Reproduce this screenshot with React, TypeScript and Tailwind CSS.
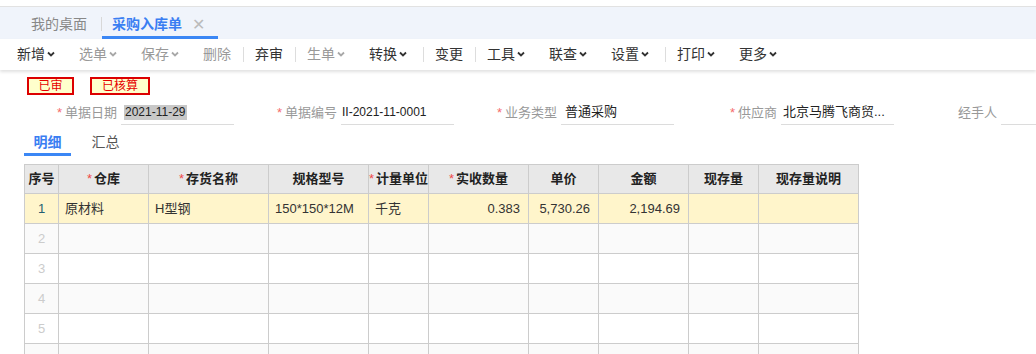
import type { ReactNode } from 'react';

type ToolItem = { label: string; drop?: boolean; disabled?: boolean; sep?: 'plain' | 'wide' };

const tools: ToolItem[] = [
  { label: '新增', drop: true },
  { label: '选单', drop: true, disabled: true },
  { label: '保存', drop: true, disabled: true },
  { label: '删除', disabled: true, sep: 'plain' },
  { label: '弃审', sep: 'plain' },
  { label: '生单', drop: true, disabled: true },
  { label: '转换', drop: true, sep: 'wide' },
  { label: '变更', sep: 'plain' },
  { label: '工具', drop: true },
  { label: '联查', drop: true },
  { label: '设置', drop: true, sep: 'wide' },
  { label: '打印', drop: true },
  { label: '更多', drop: true },
];

const cols = [
  { title: '序号', w: 'w-[34px]' },
  { title: '仓库', w: 'w-[90px]', req: true },
  { title: '存货名称', w: 'w-[120px]', req: true },
  { title: '规格型号', w: 'w-[100px]' },
  { title: '计量单位', w: 'w-[60px]', req: true },
  { title: '实收数量', w: 'w-[100px]', req: true },
  { title: '单价', w: 'w-[70px]' },
  { title: '金额', w: 'w-[90px]' },
  { title: '现存量', w: 'w-[70px]' },
  { title: '现存量说明', w: 'w-[100px]' },
];

const firstRow = ['原材料', 'H型钢', '150*150*12M', '千克', '0.383', '5,730.26', '2,194.69', '', ''];
// columns with numbers are right aligned
const rightCols = [5, 6, 7];

function Chevron({ disabled }: { disabled?: boolean }) {
  return (
    <svg width="8" height="6" viewBox="0 0 8 6" className="ml-[2px] -mt-[2px]">
      <polyline
        points="1,1.5 4,4.5 7,1.5"
        fill="none"
        stroke={disabled ? '#a8a8a8' : '#333'}
        strokeWidth="1.8"
      />
    </svg>
  );
}

function Field({ label, req, children }: { label: string; req?: boolean; children?: ReactNode }) {
  return (
    <div className="flex w-[220px] h-full items-center shrink-0">
      <div className="w-[103px] text-right text-[13px] text-[#999] whitespace-nowrap">
        {req && <span className="text-[#f56c6c] mr-[3px]">*</span>}
        {label}
      </div>
      <div className="ml-[4px] w-[113px] h-full border-b border-[#dcdcdc] flex items-center pl-[1px] text-[#222] whitespace-nowrap overflow-hidden">
        {children}
      </div>
    </div>
  );
}

export default function App() {
  return (
    <div className="w-[1036px] h-[354px] overflow-hidden bg-white font-['Liberation_Sans','Noto_Sans_CJK_SC',sans-serif]">
      {/* Page tabs */}
      <div className="h-[7px] bg-white border-b border-[#e2e2e2]" />
      <div className="flex h-[32px] bg-[#f0f4fb] text-[14px]">
        <div className="flex items-center pt-[3px] pl-[31px] pr-[14px] text-[#888]">我的桌面</div>
        <div className="w-px h-[14px] bg-[#d8d8d8] self-center mt-[2px]" />
        <div className="relative flex items-center pt-[3px] pl-[10px] pr-[13px]">
          <span className="font-bold text-[#3a7ef2]">采购入库单</span>
          <span className="ml-[10px] text-[#bbb] text-[16px] leading-none">✕</span>
          <div className="absolute left-0 right-0 bottom-0 h-[3px] bg-[#3b87f5]" />
        </div>
      </div>

      {/* Toolbar */}
      <div className="relative z-10 flex h-[31px] items-center pl-[5px] bg-white shadow-[0_2px_3px_rgba(0,0,0,0.12)] text-[14px]">
        {tools.map((t) => (
          <div key={t.label} className="flex items-center">
            <div className={`flex items-center px-[12px] ${t.disabled ? 'text-[#999]' : 'text-[#333]'}`}>
              {t.label}
              {t.drop && <Chevron disabled={t.disabled} />}
            </div>
            {t.sep && (
              <div className={`w-px h-[15px] bg-[#dddddd] -mr-px ${t.sep === 'wide' ? 'ml-[4px]' : ''}`} />
            )}
          </div>
        ))}
      </div>

      {/* Status badges */}
      <div className="flex mt-[7px] ml-[27px] gap-[16px] text-[12px] text-[#e60000]">
        <div className="w-[47px] h-[18px] border-2 border-[#dc0000] bg-[#ffffcc] flex items-center justify-center">已审</div>
        <div className="w-[60px] h-[18px] border-2 border-[#dc0000] bg-[#ffffcc] flex items-center justify-center">已核算</div>
      </div>

      {/* Header fields */}
      <div className="flex h-[25px] mt-[5px] pl-[14px]">
        <Field label="单据日期" req>
          <span className="ml-[2px] px-[1px] bg-[#c8c8c8] text-[12px] leading-[15px]">2021-11-29</span>
        </Field>
        <Field label="单据编号" req>
          <span className="text-[12px]">II-2021-11-0001</span>
        </Field>
        <Field label="业务类型" req>
          <span className="pl-[3px] text-[13px]">普通采购</span>
        </Field>
        <Field label="供应商" req>
          <span className="pl-[1px] text-[13px]">北京马腾飞商贸...</span>
        </Field>
        <Field label="经手人" />
      </div>

      {/* Detail tabs */}
      <div className="flex h-[28px] mt-[3px] pl-[24px] text-[14px]">
        <div className="relative w-[47px] flex items-center justify-center font-bold text-[#3a7ef2]">
          明细
          <div className="absolute left-0 right-0 bottom-0 h-[3px] bg-[#3b87f5]" />
        </div>
        <div className="w-[47px] ml-[11px] flex items-center justify-center text-[#555]">汇总</div>
      </div>

      {/* Grid */}
      <div className="mt-[8px] ml-[24px] w-[835px] border-l border-t border-[#cccccc] text-[13px]">
        <div className="flex h-[29px] bg-[#e8e8e8] font-bold text-[#222]">
          {cols.map((c) => (
            <div key={c.title} className={`${c.w} shrink-0 border-r border-b border-[#cccccc] flex items-center justify-center whitespace-nowrap`}>
              {c.req && <span className="text-[#f04848] font-normal mr-[2px]">*</span>}
              {c.title}
            </div>
          ))}
        </div>
        {[1, 2, 3, 4, 5, 6].map((n) => (
          <div
            key={n}
            className={`flex h-[30px] ${n === 1 ? 'bg-[#fff5cb]' : n % 2 === 0 ? 'bg-[#fafafa]' : 'bg-white'}`}
          >
            {cols.map((c, i) => (
              <div
                key={c.title}
                className={`${c.w} shrink-0 border-r border-b border-[#cccccc] flex items-center px-[6px] whitespace-nowrap ${
                  i === 0 ? 'justify-center' : rightCols.includes(i) ? 'justify-end pr-[8px]' : ''
                } ${i === 0 ? (n === 1 ? 'text-[#235d73]' : 'text-[#cccccc]') : 'text-[#333]'}`}
              >
                {i === 0 ? n : n === 1 ? firstRow[i - 1] : ''}
              </div>
            ))}
          </div>
        ))}
      </div>
    </div>
  );
}
